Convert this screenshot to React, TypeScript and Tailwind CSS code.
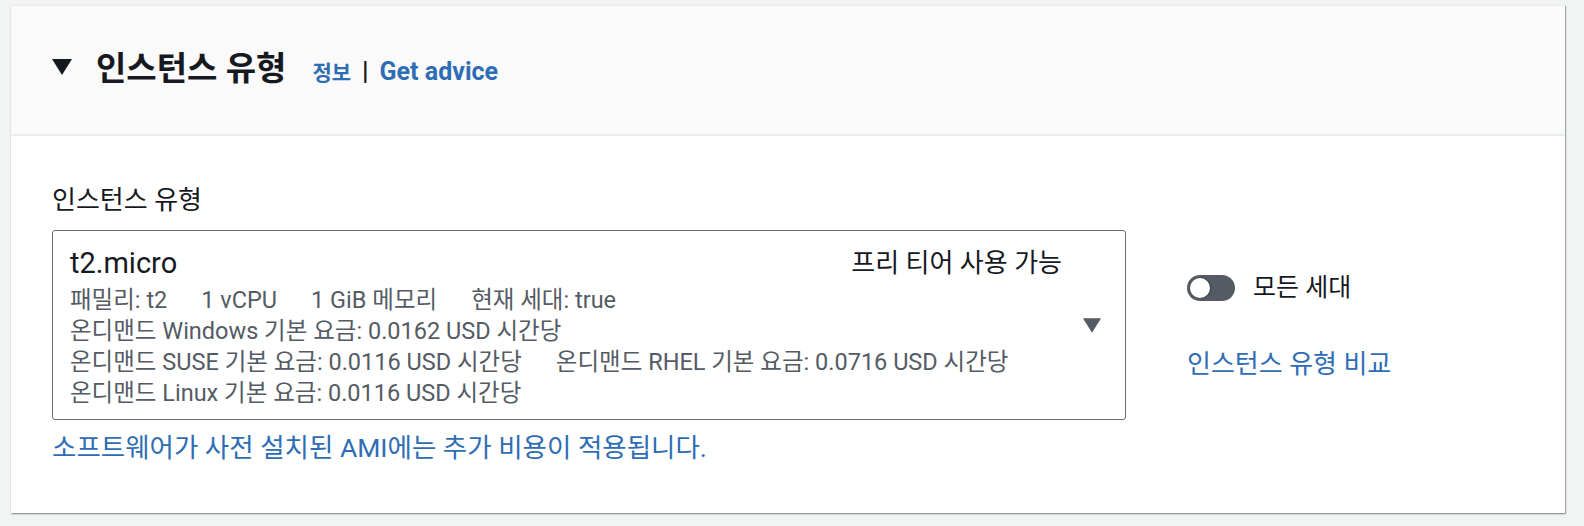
import { useState } from 'react';

const FONT = 'font-[Roboto,"Noto_Sans_CJK_KR",sans-serif]';

const DETAIL_LINES = [
  ['패밀리: t2', '1 vCPU', '1 GiB 메모리', '현재 세대: true'],
  ['온디맨드 Windows 기본 요금: 0.0162 USD 시간당'],
  ['온디맨드 SUSE 기본 요금: 0.0116 USD 시간당', '온디맨드 RHEL 기본 요금: 0.0716 USD 시간당'],
  ['온디맨드 Linux 기본 요금: 0.0116 USD 시간당'],
];

function Caret({ className }: { className: string }) {
  return (
    <svg className={className} viewBox="0 0 20 16" aria-hidden="true">
      <polygon points="0,0 20,0 10,16" fill="currentColor" />
    </svg>
  );
}

export default function App() {
  const [allGenerations, setAllGenerations] = useState(false);

  return (
    <div className={`${FONT} min-h-screen bg-[#f2f3f3] pl-[11px] pr-[19px] pt-[5px] pb-[14px]`}>
      <section className="bg-white shadow-[1px_1px_1px_rgba(0,28,36,0.3),0_1px_2px_rgba(0,28,36,0.2)] border-t border-[#eaeded]">
        {/* Header */}
        <div className="h-[130px] bg-[#fafafa] border-b-2 border-[#eaeded] flex items-center pl-[41px]">
          <Caret className="w-5 h-4 text-[#16191f] -mt-[6px]" />
          <div className="ml-6 flex items-baseline">
            <h2 className="text-[33px] leading-[40px] font-bold text-[#16191f]">인스턴스 유형</h2>
            <a href="#" className="ml-[26px] text-[21px] font-bold text-[#2e6db4]">정보</a>
            <span className="mx-[11px] text-[26px] leading-none font-bold text-[#16191f]">|</span>
            <a href="#" className="text-[25px] font-bold text-[#2e6db4]">Get advice</a>
          </div>
        </div>

        {/* Body */}
        <div className="pl-[41px] pr-10 pt-[49px] pb-[50px]">
          <div className="text-[26px] leading-[30px] text-[#16191f] mb-[15px]">인스턴스 유형</div>
          <div className="flex items-start">
            <button
              type="button"
              className="w-[1074px] h-[190px] border border-[#687078] rounded-[3px] flex items-center text-left bg-white"
            >
              <div className="flex-1 self-stretch pl-[17px] pt-[12px]">
                <div className="flex items-center justify-between">
                  <span className="text-[29px] leading-[40px] text-[#16191f]">t2.micro</span>
                  <span className="text-[26px] leading-[40px] text-[#16191f]">프리 티어 사용 가능</span>
                </div>
                <div className="mt-[2px] text-[23.5px] leading-[31px] text-[#545b64]">
                  {DETAIL_LINES.map((line, i) => (
                    <div key={i} className="flex gap-[34px] whitespace-nowrap">
                      {line.map((item) => (
                        <span key={item}>{item}</span>
                      ))}
                    </div>
                  ))}
                </div>
              </div>
              <div className="pl-[21px] pr-[24px]">
                <Caret className="w-[18px] h-[15px] text-[#545b64]" />
              </div>
            </button>

            <div className="ml-[61px] mt-[43px] flex flex-col items-start">
              <button
                type="button"
                onClick={() => setAllGenerations(!allGenerations)}
                className="flex items-center"
              >
                <span
                  className={[
                    'w-12 h-[26px] rounded-full p-[3px] flex',
                    allGenerations ? 'bg-[#0073bb] justify-end' : 'bg-[#545b64] justify-start',
                  ].join(' ')}
                >
                  <span className="w-5 h-5 rounded-full bg-white shadow-[1px_0_2px_rgba(0,0,0,0.35)]" />
                </span>
                <span className="ml-[18px] text-[25px] leading-[30px] text-[#16191f]">모든 세대</span>
              </button>
              <a href="#" className="mt-[46px] text-[26px] leading-[30px] text-[#2e6db4]">
                인스턴스 유형 비교
              </a>
            </div>
          </div>
          <a href="#" className="block mt-[13px] text-[26.5px] leading-[30px] text-[#2e6db4]">
            소프트웨어가 사전 설치된 AMI에는 추가 비용이 적용됩니다.
          </a>
        </div>
      </section>
    </div>
  );
}
